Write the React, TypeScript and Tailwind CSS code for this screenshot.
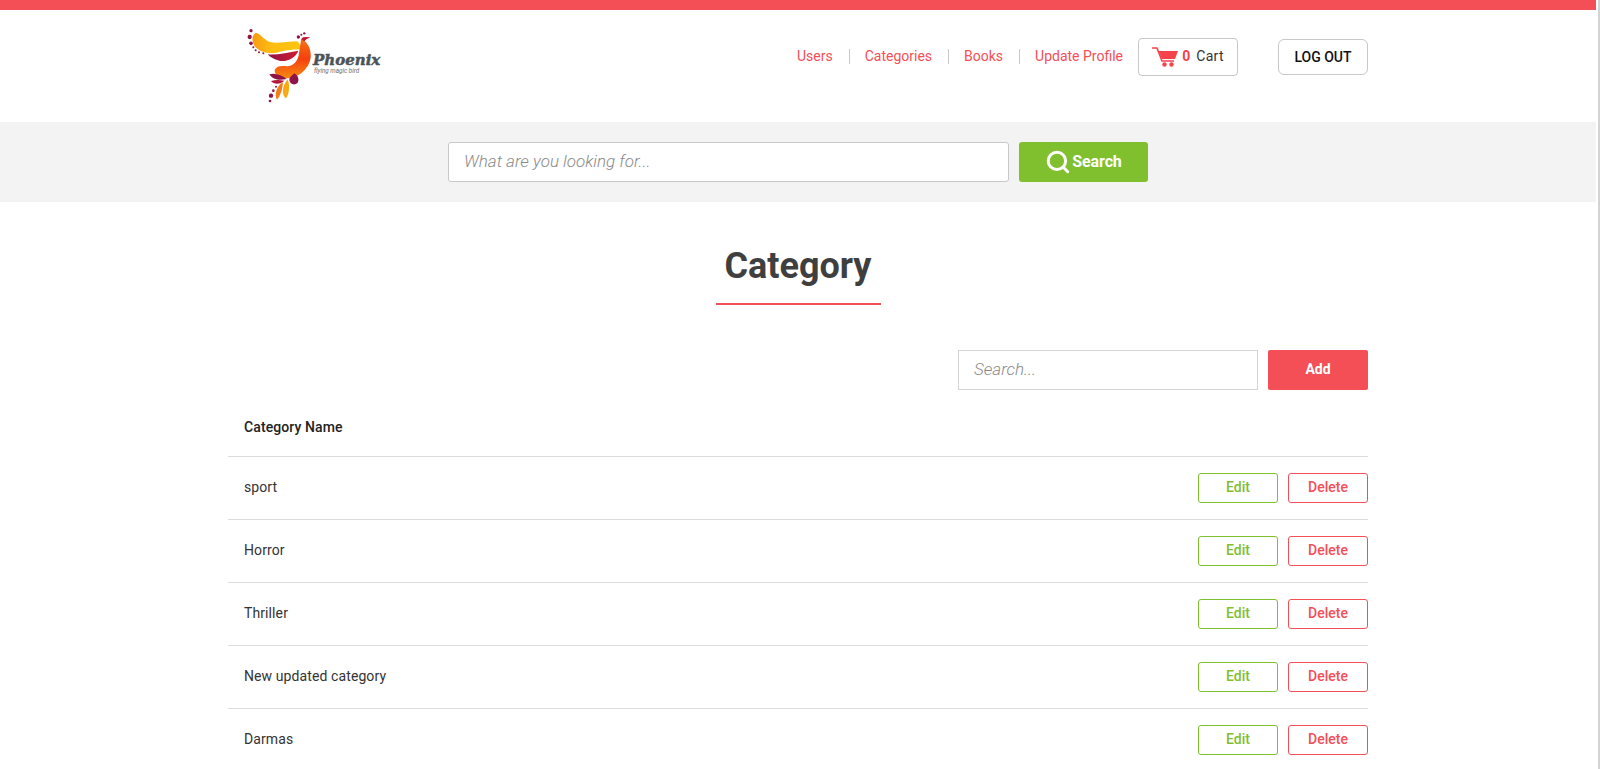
import { Search } from "lucide-react"

const font = "font-['Roboto',sans-serif]"

const categories = ["sport", "Horror", "Thriller", "New updated category", "Darmas"]

function PhoenixLogo() {
    return (
        <svg width="150" height="90" viewBox="0 0 450 270" className="shrink-0">
            <defs>
                <linearGradient id="swoosh" x1="0%" y1="0%" x2="100%" y2="0%">
                    <stop offset="0%" stopColor="#f79a12" />
                    <stop offset="35%" stopColor="#fdbb12" />
                    <stop offset="100%" stopColor="#fcc60f" />
                </linearGradient>
                <linearGradient id="wing" x1="0%" y1="0%" x2="100%" y2="0%">
                    <stop offset="0%" stopColor="#8f1346" />
                    <stop offset="100%" stopColor="#d3192f" />
                </linearGradient>
                <linearGradient id="neck" x1="0%" y1="0%" x2="0%" y2="100%">
                    <stop offset="0%" stopColor="#f7720f" />
                    <stop offset="50%" stopColor="#f4400f" />
                    <stop offset="100%" stopColor="#f78a10" />
                </linearGradient>
            </defs>
            <g fill="#8f1346">
                <circle cx="48" cy="32" r="5" />
                <circle cx="44" cy="51" r="6.5" />
                <circle cx="48" cy="70" r="5.5" />
                <circle cx="55" cy="82" r="3" />
                <circle cx="62" cy="91" r="3" />
                <circle cx="72" cy="97" r="3" />
                <circle cx="85" cy="100" r="3" />
                <circle cx="190" cy="51" r="5" />
                <circle cx="199" cy="44" r="3" />
                <circle cx="208" cy="40" r="3.5" />
                <circle cx="123" cy="200" r="3" />
                <circle cx="115" cy="212" r="4" />
                <circle cx="108" cy="227" r="6.5" />
                <circle cx="105" cy="243" r="4" />
            </g>
            <path d="M62 38C77 40 84 58 105 66 125 72 160 64 187 64 192 70 197 76 199 88 185 88 150 90 125 98 100 103 70 94 58 77 50 62 50 46 62 38z" fill="url(#swoosh)" />
            <path d="M98 103C125 106 160 97 190 92 182 114 155 127 133 122 117 118 105 112 98 103z" fill="url(#wing)" />
            <path d="M198 58C214 62 230 85 227 112 224 142 195 173 160 175 138 175 119 167 119 152 121 139 140 136 155 139 175 140 190 122 192 100 194 85 197 70 198 58z" fill="url(#neck)" />
            <path d="M198 58l6-6 10-1 12 1-12 6-6 6z" fill="#c8152f" />
            <path d="M103 163C120 158 140 165 155 177 135 182 113 180 103 163z" fill="#8f1346" />
            <path d="M108 183C122 179 134 180 148 182 136 193 118 195 108 183z" fill="#b3153c" />
            <path d="M178 160C190 167 194 180 187 190 177 197 164 192 163 180 163 171 172 167 178 160z" fill="#8f1346" />
            <path d="M158 178C165 194 163 224 153 235 140 228 140 198 158 178z" fill="#f9a911" />
            <path d="M143 186C144 204 137 226 126 239 118 226 122 202 143 186z" fill="#f57e14" />
            <text x="234" y="135" fontFamily="'DejaVu Serif',serif" fontWeight="700" fontStyle="italic" fontSize="45" fill="#4c5356" stroke="#4c5356" strokeWidth="1.5">Phoenix</text>
            <text x="237" y="160" fontFamily="'Roboto',sans-serif" fontStyle="italic" fontSize="19" fill="#6b7073">flying magic bird</text>
        </svg>
    )
}

function CartIcon() {
    return (
        <svg width="26" height="20" viewBox="0 0 26 20" className="shrink-0">
            <path d="M0 1h5l5 13h12" fill="none" stroke="#f5424b" strokeWidth="1.6" />
            <path d="M6.5 4H26l-3 8H10z" fill="#f5424b" />
            <circle cx="12.5" cy="17.5" r="2.2" fill="#f5424b" />
            <circle cx="19.5" cy="17.5" r="2.2" fill="#f5424b" />
        </svg>
    )
}

function NavLink({ label, divided }: { label: string; divided?: boolean }) {
    return (
        <a className={divided ? "border-l border-[#c8c8c8] pl-[15px] leading-[15px] text-[14px] text-[#f44e57]" : "leading-[15px] text-[14px] text-[#f44e57]"}>
            {label}
        </a>
    )
}

export default function App() {
    return (
        <div className={`${font} relative h-[769px] overflow-hidden bg-white pr-[4px] text-[#222]`}>
            <div className="h-[10px] bg-[#f44e57]" />

            <header className="mx-auto flex h-[112px] w-[1140px] items-start justify-between pl-[7px]">
                <div className="pt-[10px]">
                    <PhoenixLogo />
                </div>
                <div className="flex items-center pt-[28px]">
                    <nav className="flex items-center gap-[16px] pb-[2px]">
                        <NavLink label="Users" />
                        <NavLink label="Categories" divided />
                        <NavLink label="Books" divided />
                        <NavLink label="Update Profile" divided />
                    </nav>
                    <button className="ml-[15px] flex h-[38px] w-[100px] items-center justify-center rounded-[4px] border border-[#c8c8c8] pb-[1px] text-[14px] text-[#333]">
                        <CartIcon />
                        <span className="ml-[4px] font-bold text-[#f5424b]">0</span>
                        <span className="ml-[6px] tracking-[0.3px]">Cart</span>
                    </button>
                    <button className="ml-[40px] h-[36px] w-[90px] rounded-[6px] border border-[#c8c8c8] text-[14px] font-medium text-[#111]">
                        LOG OUT
                    </button>
                </div>
            </header>

            <section className="flex h-[80px] items-center justify-center gap-[10px] bg-[#f3f3f3]">
                <input
                    placeholder="What are you looking for..."
                    className="h-[40px] w-[561px] rounded-[3px] border border-[#c8c8c8] bg-white px-[15px] pb-[2px] text-[17px] font-light italic placeholder:text-[#8a8a8a]"
                />
                <button className="flex h-[40px] w-[129px] items-center justify-center gap-[1px] rounded-[3px] bg-[#80bf2e] text-[16px] font-bold text-white">
                    <Search size={26} strokeWidth={2.8} />
                    <span className="tracking-[-0.1px]">Search</span>
                </button>
            </section>

            <main className="mx-auto w-[1140px]">
                <div className="flex flex-col items-center pt-[42px]">
                    <h1 className="text-[36px] leading-[45px] font-bold text-[#3f3f3f]">Category</h1>
                    <div className="mt-[14px] h-[2px] w-[165px] bg-[#f44e57]" />
                </div>

                <div className="mt-[45px] flex justify-end gap-[10px]">
                    <input
                        placeholder="Search..."
                        className="h-[40px] w-[300px] border border-[#d4d4d4] px-[15px] pb-[2px] text-[17px] font-light italic placeholder:text-[#8a8a8a]"
                    />
                    <button className="h-[40px] w-[100px] rounded-[2px] bg-[#f44e57] pb-[2px] text-[14px] font-bold text-white">Add</button>
                </div>

                <div className="flex h-[67px] items-end border-b border-[#dcdcdc] pr-[15px] pb-[21px] pl-[16px] text-[14px] leading-[16px] font-medium tracking-[0.1px] text-[#222]">
                    Category Name
                </div>

                {categories.map((name) => (
                    <div key={name} className="flex h-[63px] items-center justify-between border-b border-[#dcdcdc] pl-[16px] text-[14px] text-[#333]">
                        <span className="pb-[2px] tracking-[0.1px]">{name}</span>
                        <div className="flex gap-[10px]">
                            <button className="h-[30px] w-[80px] rounded-[3px] border border-[#80bf2e] pb-[2px] text-[14px] font-medium text-[#80bf2e]">Edit</button>
                            <button className="h-[30px] w-[80px] rounded-[3px] border border-[#f44e57] pb-[2px] text-[14px] font-medium text-[#f44e57]">Delete</button>
                        </div>
                    </div>
                ))}
            </main>

            <div className="absolute top-0 right-0 h-full w-[2px] bg-[#d4d4d4]" />
        </div>
    )
}
